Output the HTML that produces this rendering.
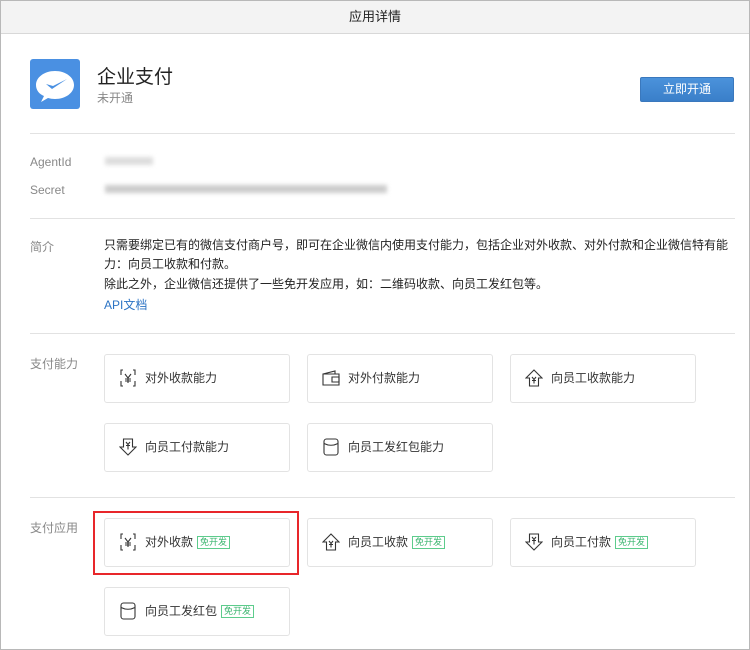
<!DOCTYPE html>
<html><head><meta charset="utf-8"><style>
*{margin:0;padding:0;box-sizing:border-box}
body{width:750px;height:650px;background:#fff;font-family:"Liberation Sans","Noto Sans CJK SC",sans-serif;color:#333;position:relative;overflow:hidden}
.frame{position:absolute;left:0;top:0;width:750px;height:650px;border:1px solid #b8b8b8}
.hdr{position:absolute;left:1px;top:1px;width:748px;height:33px;background:#f3f3f3;border-bottom:1px solid #d8d8d8;text-align:center;line-height:32px;font-size:13px;color:#222}
.a{position:absolute}
.hr{position:absolute;left:30px;width:705px;height:1px;background:#e2e2e2}
.lbl{position:absolute;left:30px;font-size:12px;color:#888}
.card{position:absolute;width:186px;height:49px;border:1px solid #e3e3e3;border-radius:3px;font-size:12px;color:#333;line-height:47px;padding-left:40px}
.card svg{position:absolute;left:14px;top:14px}
.tag{display:inline-block;border:1px solid #5dcc8c;color:#3bb56f;font-size:9px;line-height:11px;padding:0 2px;margin-left:4px;vertical-align:1px}
</style></head><body>
<div class="frame"></div>
<div class="hdr">应用详情</div>
<div class="a" style="left:30px;top:59px;width:50px;height:50px;background:#4a90e2;border-radius:3px">
<svg width="50" height="50" viewBox="0 0 50 50"><path d="M25 12c-11 0-19 6.5-19 14 0 5 3 9 8 11l-3 6 7-4c2 .6 4.5 1 7 1 11 0 19-6.5 19-14s-8-14-19-14z" fill="#fff"/><path d="M16 25l6 5 15-10-14 7z" fill="#4a90e2"/></svg></div>
<div class="a" style="left:97px;top:62px;font-size:19px;color:#222">企业支付</div>
<div class="a" style="left:97px;top:89px;font-size:12px;color:#888">未开通</div>
<div class="a" style="left:640px;top:77px;width:94px;height:25px;background:linear-gradient(#4b92db,#3a7fc9);border:1px solid #3a78bd;border-radius:2px;color:#fff;font-size:12px;text-align:center;line-height:23px">立即开通</div>
<div class="hr" style="top:133px"></div>
<div class="lbl" style="top:155px">AgentId</div>
<div class="a" style="left:105px;top:157px;width:48px;height:8px;background:#ddd;filter:blur(2px)"></div>
<div class="lbl" style="top:183px">Secret</div>
<div class="a" style="left:105px;top:185px;width:282px;height:8px;background:#ccc;filter:blur(2px)"></div>
<div class="hr" style="top:218px"></div>
<div class="lbl" style="top:238px">简介</div>
<div class="a" style="left:104px;top:236px;font-size:12px;line-height:19.3px;color:#222">只需要绑定已有的微信支付商户号，即可在企业微信内使用支付能力，包括企业对外收款、对外付款和企业微信特有能<br>力：向员工收款和付款。<br>除此之外，企业微信还提供了一些免开发应用，如：二维码收款、向员工发红包等。<br><span style="color:#2b73c4;line-height:22px">API文档</span></div>
<div class="hr" style="top:333px"></div>
<div class="lbl" style="top:355px">支付能力</div>
<svg width="0" height="0" style="position:absolute"><defs>
<g id="scan" fill="none" stroke="#333" stroke-width="1.1"><path d="M4 1H2v5M14 1h2v5M4 17H2v-5M14 17h2v-5"/><path d="M6 5l3 4 3-4M9 9v5M6 10h6M6 12h6"/></g>
<g id="wal" fill="none" stroke="#333" stroke-width="1.1"><path d="M1 5h16v11H1z M1 5l12-3v3"/><path d="M10 8h7v5h-7z"/></g>
<g id="up" fill="none" stroke="#333" stroke-width="1.1"><path d="M9 1L1 9h3.5v8h9V9H17z"/><path d="M7 8l2 2.5L11 8M9 10.5v4M7 11.5h4"/></g>
<g id="dn" fill="none" stroke="#333" stroke-width="1.1"><path d="M4.5 1h9v8H17l-8 8-8-8h3.5z"/><path d="M7 4l2 2.5L11 4M9 6.5v5M7 7.5h4"/></g>
<g id="red" fill="none" stroke="#333" stroke-width="1.1"><rect x="2" y="1" width="14" height="16" rx="2.5"/><path d="M2 5.5q7 3.5 14 0"/></g>
</defs></svg>
<div class="card" style="left:104px;top:354px"><svg width="18" height="18"><use href="#scan"/></svg>对外收款能力</div>
<div class="card" style="left:307px;top:354px"><svg width="18" height="18"><use href="#wal"/></svg>对外付款能力</div>
<div class="card" style="left:510px;top:354px"><svg width="18" height="18"><use href="#up"/></svg>向员工收款能力</div>
<div class="card" style="left:104px;top:423px"><svg width="18" height="18"><use href="#dn"/></svg>向员工付款能力</div>
<div class="card" style="left:307px;top:423px"><svg width="18" height="18"><use href="#red"/></svg>向员工发红包能力</div>
<div class="hr" style="top:497px"></div>
<div class="lbl" style="top:519px">支付应用</div>
<div class="card" style="left:104px;top:518px"><svg width="18" height="18"><use href="#scan"/></svg>对外收款<span class="tag">免开发</span></div>
<div class="a" style="left:93px;top:511px;width:206px;height:64px;border:2px solid #e8262a"></div>
<div class="card" style="left:307px;top:518px"><svg width="18" height="18"><use href="#up"/></svg>向员工收款<span class="tag">免开发</span></div>
<div class="card" style="left:510px;top:518px"><svg width="18" height="18"><use href="#dn"/></svg>向员工付款<span class="tag">免开发</span></div>
<div class="card" style="left:104px;top:587px"><svg width="18" height="18"><use href="#red"/></svg>向员工发红包<span class="tag">免开发</span></div>
</body></html>
